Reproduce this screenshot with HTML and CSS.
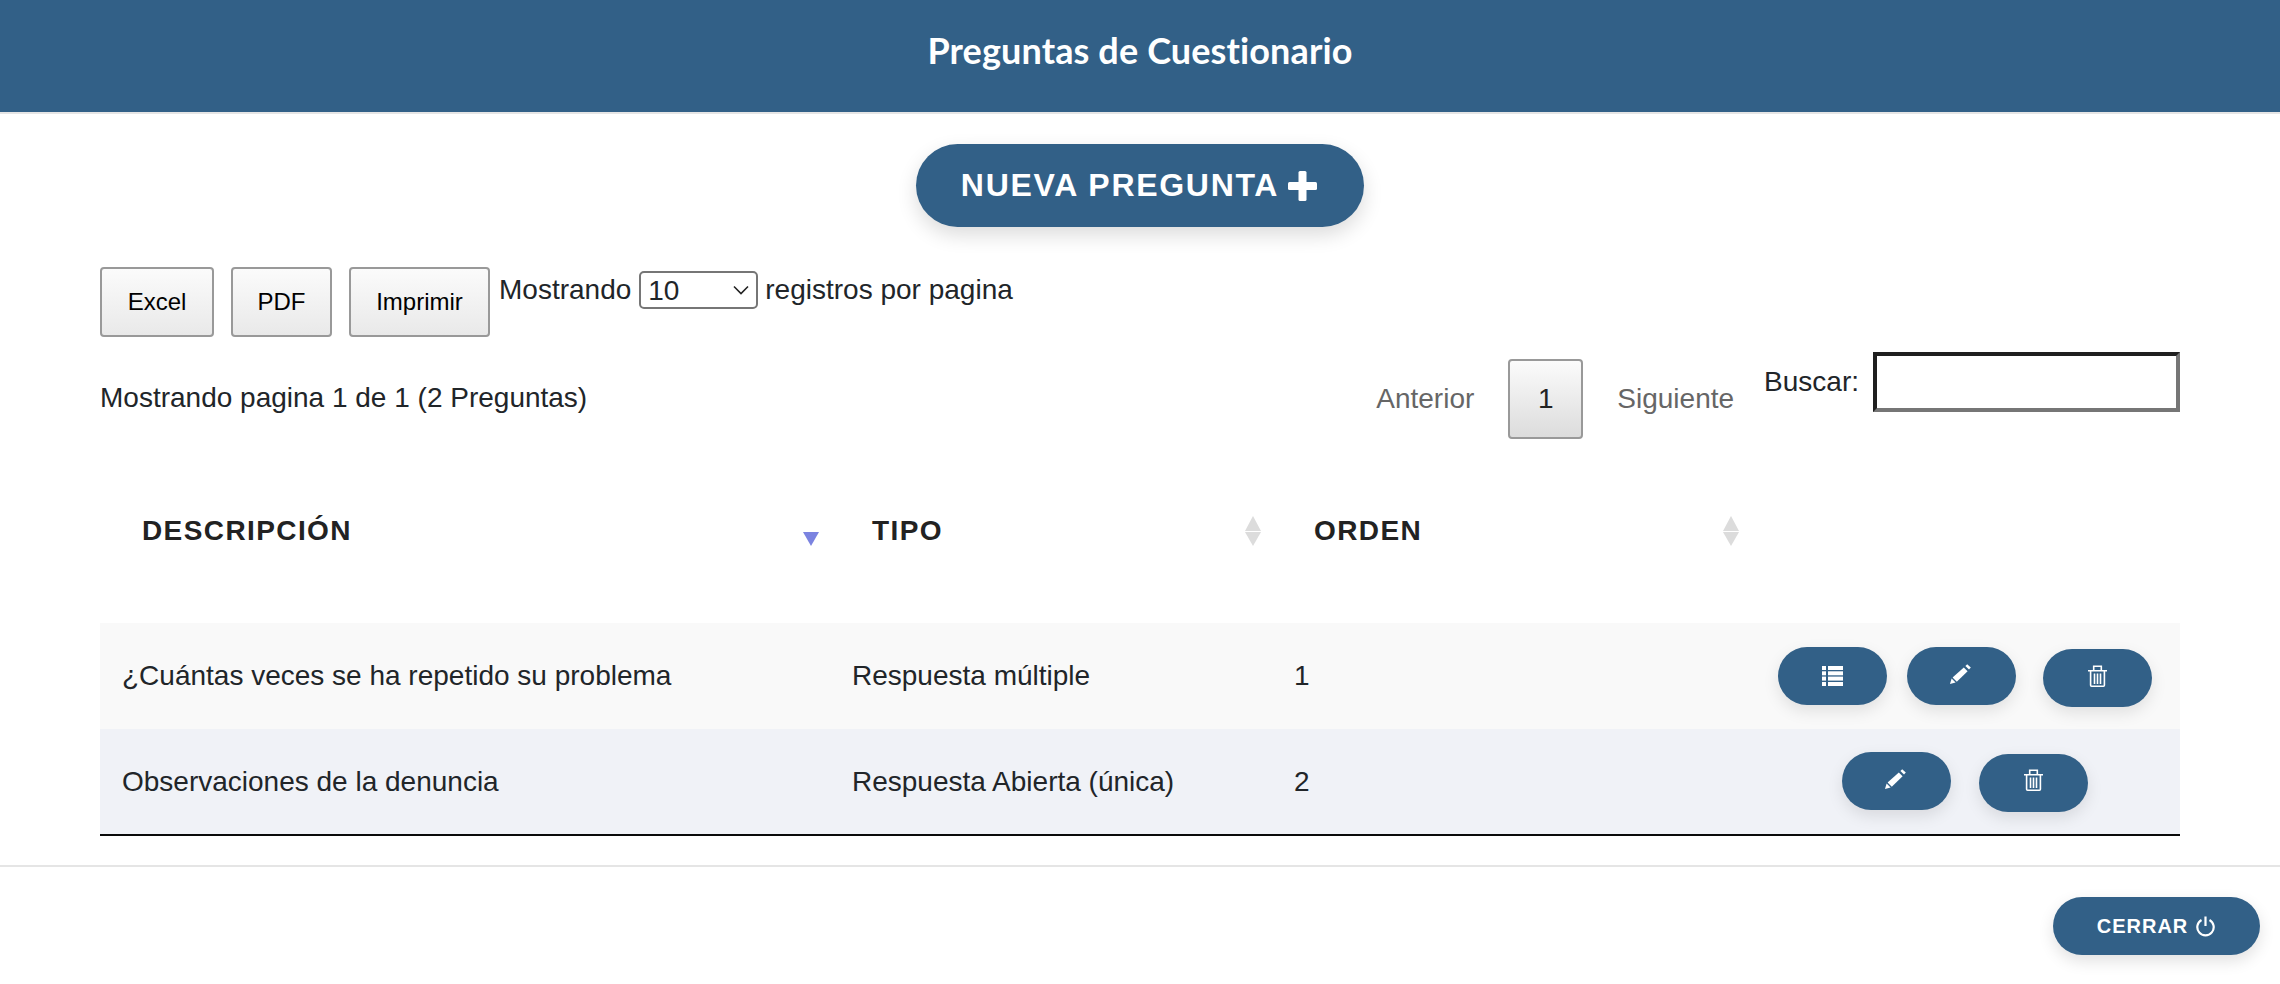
FILE: index.html
```html
<!DOCTYPE html>
<html lang="es">
<head>
<meta charset="utf-8">
<title>Preguntas de Cuestionario</title>
<link rel="stylesheet" href="styles.css">
</head>
<body>
<header class="page-header"><h1 class="page-title">Preguntas de Cuestionario</h1></header>
<main class="content">
  <div class="new-wrap">
    <button class="pill pill-new" type="button">NUEVA PREGUNTA
      <svg class="icon-plus" viewBox="0 0 29 30"><rect x="10.5" y="0" width="8" height="30" rx="1.5"/><rect x="0" y="11" width="29" height="8" rx="1.5"/></svg>
    </button>
  </div>
  <div class="toolbar">
    <button class="btn btn-excel" type="button">Excel</button>
    <button class="btn btn-pdf" type="button">PDF</button>
    <button class="btn btn-print" type="button">Imprimir</button>
    <div class="length">
      <span>Mostrando</span>
      <span class="select-wrap">
        <select class="select"><option>10</option><option>25</option><option>50</option></select>
        <svg class="select-arrow" viewBox="0 0 16 10"><path d="M1 1.5 8 8.5 15 1.5"/></svg>
      </span>
      <span>registros por pagina</span>
    </div>
  </div>
  <div class="status-row">
    <div class="info">Mostrando pagina 1 de 1 (2 Preguntas)</div>
    <div class="controls">
      <div class="pager">
        <span class="page-link">Anterior</span>
        <button class="btn btn-page" type="button">1</button>
        <span class="page-link">Siguiente</span>
      </div>
      <label class="search"><span>Buscar:</span><input class="search-input" type="text"></label>
    </div>
  </div>
  <table class="data">
    <thead>
      <tr>
        <th class="col-desc"><span class="th-text">DESCRIPCIÓN</span><span class="sort sort-desc"></span></th>
        <th class="col-type"><span class="th-text">TIPO</span><span class="sort sort-both"></span></th>
        <th class="col-order"><span class="th-text">ORDEN</span><span class="sort sort-both"></span></th>
        <th class="col-actions"></th>
      </tr>
    </thead>
    <tbody>
      <tr class="row-a">
        <td>¿Cuántas veces se ha repetido su problema</td>
        <td>Respuesta múltiple</td>
        <td>1</td>
        <td>
          <div class="actions">
            <button class="pill pill-act gap-list" type="button" aria-label="Opciones">
              <svg class="icon icon-list" viewBox="0 0 21 20"><rect x="0" y="0" width="4" height="4"/><rect x="6" y="0" width="15" height="4"/><rect x="0" y="5.3" width="4" height="4"/><rect x="6" y="5.3" width="15" height="4"/><rect x="0" y="10.6" width="4" height="4"/><rect x="6" y="10.6" width="15" height="4"/><rect x="0" y="16" width="4" height="4"/><rect x="6" y="16" width="15" height="4"/></svg>
            </button>
            <button class="pill pill-act gap-edit" type="button" aria-label="Editar">
              <svg class="icon icon-pencil" viewBox="0 0 21 20"><path d="M0 20 1.6 14.6 5.6 18.6Z"/><path d="M2.6 13.4 13.8 3.4 17.6 7.2 6.8 17.8Z"/><path d="M15.4 2 17.2 0.2 20.8 3.4 19 5.4Z"/></svg>
            </button>
            <button class="pill pill-act pill-low" type="button" aria-label="Eliminar">
              <svg class="icon icon-trash" viewBox="0 0 19 22"><path class="line" d="M0 5.8H19M5.7 5V1.2H13.3V5M2.6 6.5V20.2Q2.6 21.2 3.6 21.2H15.4Q16.4 21.2 16.4 20.2V6.5M6.5 8.5V19M9.5 8.5V19M12.5 8.5V19"/></svg>
            </button>
          </div>
        </td>
      </tr>
      <tr class="row-b">
        <td>Observaciones de la denuncia</td>
        <td>Respuesta Abierta (única)</td>
        <td>2</td>
        <td>
          <div class="actions">
            <button class="pill pill-act gap-edit" type="button" aria-label="Editar">
              <svg class="icon icon-pencil" viewBox="0 0 21 20"><path d="M0 20 1.6 14.6 5.6 18.6Z"/><path d="M2.6 13.4 13.8 3.4 17.6 7.2 6.8 17.8Z"/><path d="M15.4 2 17.2 0.2 20.8 3.4 19 5.4Z"/></svg>
            </button>
            <button class="pill pill-act pill-low" type="button" aria-label="Eliminar">
              <svg class="icon icon-trash" viewBox="0 0 19 22"><path class="line" d="M0 5.8H19M5.7 5V1.2H13.3V5M2.6 6.5V20.2Q2.6 21.2 3.6 21.2H15.4Q16.4 21.2 16.4 20.2V6.5M6.5 8.5V19M9.5 8.5V19M12.5 8.5V19"/></svg>
            </button>
          </div>
        </td>
      </tr>
    </tbody>
  </table>
</main>
<footer class="page-footer">
  <button class="pill pill-close" type="button">CERRAR
    <svg class="icon-power" viewBox="0 0 19 21"><path class="line" d="M5.5 4A8.2 8.2 0 1 0 13.5 4M9.5 0.5V10"/></svg>
  </button>
</footer>
</body>
</html>
```
FILE: styles.css
```css
* { box-sizing: border-box; }
html, body { margin: 0; padding: 0; }
body {
  background: #fff;
  color: #212529;
  font-family: "Liberation Sans", Arial, sans-serif;
  font-size: 28px;
  line-height: 32px;
}
.page-header {
  height: 114px;
  background: #326087;
  border-bottom: 2px solid #e5e5e5;
  display: flex;
  align-items: flex-start;
  justify-content: center;
}
.page-title {
  margin: 28px 0 0;
  color: #fff;
  font-family: Lato, sans-serif;
  font-weight: 700;
  font-size: 36px;
  line-height: 44px;
  letter-spacing: .12px;
  font-variant-ligatures: none;
}
.content { padding: 30px 100px 0; }
.new-wrap { display: flex; justify-content: center; }
.pill {
  background: #326087;
  color: #fff;
  border: 0;
  font-family: "Liberation Sans", Arial, sans-serif;
  font-weight: 700;
  padding: 0;
  display: flex;
  align-items: center;
  justify-content: center;
}
.pill-new {
  width: 448px;
  height: 83px;
  border-radius: 42px;
  font-size: 32px;
  letter-spacing: 1.7px;
  gap: 10px;
  box-shadow: 0 8px 20px rgba(0, 0, 0, .14);
}
.icon-plus { width: 29px; height: 30px; fill: #fff; margin-left: -1px; margin-right: 2px; }
.toolbar { display: flex; margin-top: 40px; height: 70px; }
.btn {
  border: 2px solid #999;
  border-radius: 4px;
  background: linear-gradient(#fbfbfb, #e9e9e9);
  color: #000;
  font-family: "Liberation Sans", Arial, sans-serif;
  font-size: 24px;
  padding: 0;
}
.btn-excel { width: 114px; margin-right: 17px; }
.btn-pdf { width: 101px; margin-right: 17px; }
.btn-print { width: 141px; margin-right: 9px; }
.length { display: flex; align-items: center; gap: 8px; height: 38px; margin-top: 4px; }
.select-wrap { position: relative; display: block; width: 119px; height: 38px; margin-right: -1px; }
.select {
  appearance: none;
  width: 100%;
  height: 100%;
  border: 2px solid #767676;
  border-radius: 5px;
  background: #fff;
  color: #212529;
  font-family: "Liberation Sans", Arial, sans-serif;
  font-size: 28px;
  padding: 0 0 0 7px;
}
.select-arrow {
  position: absolute;
  right: 9px;
  top: 14px;
  width: 16px;
  height: 10px;
  fill: none;
  stroke: #222;
  stroke-width: 1.6;
}
.status-row { display: flex; justify-content: space-between; margin-top: 15px; height: 87px; }
.info { margin-top: 30px; }
.controls { display: flex; align-items: flex-start; }
.pager { display: flex; align-items: center; gap: 34px; margin-top: 7px; height: 80px; color: #666; }
.page-link { color: #666; }
.btn-page {
  width: 75px;
  height: 80px;
  font-size: 28px;
  color: #222;
  background: linear-gradient(#fbfbfb, #dcdcdc);
}
.search { display: flex; align-items: center; gap: 14px; margin-left: 30px; height: 60px; }
.search-input {
  width: 307px;
  height: 60px;
  background: #fff;
  border-style: solid;
  border-width: 4px;
  border-color: #1f1f1f #767676 #767676 #1f1f1f;
  padding: 0;
  outline: 0;
}
.data { width: 2080px; table-layout: fixed; border-collapse: collapse; margin-top: 31px; border-bottom: 2px solid #0a0a0a; }
.col-desc { width: 730px; }
.col-type { width: 442px; }
.col-order { width: 478px; }
.col-actions { width: 430px; }
.data th {
  position: relative;
  height: 153px;
  padding: 0 0 32px 42px;
  text-align: left;
  font-weight: 700;
  letter-spacing: 1.4px;
  color: #222;
}
.sort { position: absolute; right: 10px; top: 46px; width: 17px; height: 30px; }
.sort::before, .sort::after {
  content: "";
  position: absolute;
  left: 0;
  border-left: 8.5px solid transparent;
  border-right: 8.5px solid transparent;
}
.sort::before { top: 0; border-bottom: 15px solid #dcdcdc; }
.sort::after { top: 16px; border-top: 14px solid #dcdcdc; }
.sort-desc::before { display: none; }
.sort-desc::after { border-top-color: #7b83e0; }
.data td { padding: 0 22px; height: 106px; }
.row-a td { background: #f9f9f9; }
.row-b td { background: #f0f2f7; height: 106px; }
.row-b .actions { margin-bottom: 2px; }
.actions { display: flex; justify-content: center; align-items: center; }
.pill-act {
  width: 109px;
  height: 58px;
  border-radius: 29px;
  box-shadow: 0 6px 16px rgba(0, 0, 0, .1);
  flex: none;
}
.gap-list { margin-right: 20px; }
.gap-edit { margin-right: 27px; }
.row-b .gap-edit { margin-right: 28px; }
.pill-low { margin-top: 4px; }
.icon { display: block; fill: #fff; }
.icon-list { width: 21px; height: 20px; }
.icon-pencil { width: 21px; height: 20px; margin-top: -4px; margin-left: -3px; }
.icon-trash { width: 19px; height: 22px; margin-left: -1px; margin-top: -5px; }
.line { fill: none; stroke: #fff; stroke-width: 1.6; }
.page-footer {
  margin-top: 29px;
  border-top: 2px solid #e5e5e5;
  padding: 30px 20px 28px 0;
  display: flex;
  justify-content: flex-end;
}
.pill-close {
  width: 207px;
  height: 58px;
  border-radius: 29px;
  font-size: 20px;
  letter-spacing: 1px;
  gap: 8px;
  box-shadow: 0 6px 16px rgba(0, 0, 0, .12);
}
.icon-power { width: 19px; height: 21px; margin-right: 1px; }
.icon-power .line { stroke-width: 2.2; }
```
